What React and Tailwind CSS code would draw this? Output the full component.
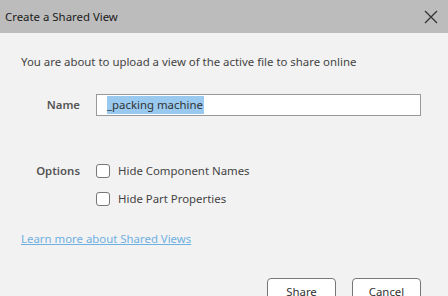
import React from "react";

export default function App() {
  return (
    <div
      className="w-[448px] h-[296px] overflow-hidden flex flex-col bg-[#f2f2f2]"
      style={{ fontFamily: '"Noto Sans", "Open Sans", sans-serif' }}
    >
      <div className="h-[33px] shrink-0 bg-[#bcbcbc] flex items-center justify-between pl-[5px] pr-[10px]">
        <span className="text-[11.4px] text-[#1a1a1a]">Create a Shared View</span>
        <svg width="14" height="14" viewBox="0 0 14 14" className="mt-[1px]">
          <path d="M1 1L13 13M13 1L1 13" stroke="#333" strokeWidth="1.3" />
        </svg>
      </div>
      <div className="flex flex-col pl-[21px] pt-[21px] text-[11.4px] text-[#444]">
        <div className="leading-[16px]">You are about to upload a view of the active file to share online</div>
        <div className="flex items-center mt-[24px]">
          <div className="w-[59px] text-right font-semibold text-[#555]">Name</div>
          <div className="ml-[16px] w-[325px] h-[22px] border border-[#999] bg-white flex items-center pl-[10px]">
            <span className="bg-[#99c9ef] text-[#333] leading-[18px] pr-[1px]">_packing machine</span>
          </div>
        </div>
        <div className="flex items-center mt-[46px] h-[18px]">
          <div className="w-[59px] text-right font-semibold text-[#555]">Options</div>
          <div className="ml-[16px] w-[14px] h-[14px] border border-[#777] rounded-[3px] bg-white" />
          <span className="ml-[8px]">Hide Component Names</span>
        </div>
        <div className="flex items-center mt-[10px] h-[18px]">
          <div className="ml-[75px] w-[14px] h-[14px] border border-[#777] rounded-[3px] bg-white" />
          <span className="ml-[8px]">Hide Part Properties</span>
        </div>
        <div className="mt-[23px] leading-[16px]">
          <span className="text-[#6fb0e2] underline">Learn more about Shared Views</span>
        </div>
        <div className="flex justify-end gap-[16px] mt-[31px] pr-[27px]">
          <div className="w-[69px] h-[26px] border border-[#777] rounded-[4px] bg-white flex justify-center pt-[4px] text-[#333]">Share</div>
          <div className="w-[69px] h-[26px] border border-[#777] rounded-[4px] bg-white flex justify-center pt-[4px] text-[#333]">Cancel</div>
        </div>
      </div>
    </div>
  );
}
